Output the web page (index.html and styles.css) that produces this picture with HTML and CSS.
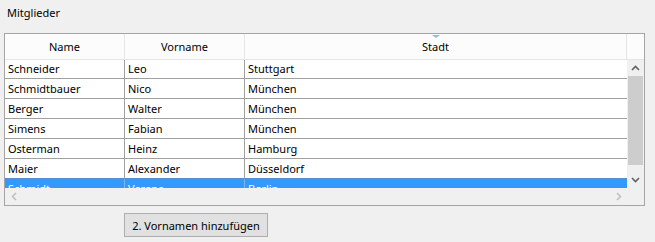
FILE: index.html
```html
<!doctype html>
<html lang="de">
<head>
    <meta charset="UTF-8">
    <title>Mitglieder</title>
    <link rel="stylesheet" href="styles.css">
</head>
<body>
    <div class="group">
        <div class="group-title">Mitglieder</div>
        <div class="grid">
            <div class="grid-header">
                <div class="head-cell">Name</div>
                <div class="head-cell">Vorname</div>
                <div class="head-cell sorted">Stadt<span class="sort-arrow"></span></div>
                <div class="head-cell filler"></div>
            </div>
            <div class="grid-body">
                <div class="row"><div class="cell">Schneider</div><div class="cell">Leo</div><div class="cell">Stuttgart</div></div>
                <div class="row"><div class="cell">Schmidtbauer</div><div class="cell">Nico</div><div class="cell">München</div></div>
                <div class="row"><div class="cell">Berger</div><div class="cell">Walter</div><div class="cell">München</div></div>
                <div class="row"><div class="cell">Simens</div><div class="cell">Fabian</div><div class="cell">München</div></div>
                <div class="row"><div class="cell">Osterman</div><div class="cell">Heinz</div><div class="cell">Hamburg</div></div>
                <div class="row"><div class="cell">Maier</div><div class="cell">Alexander</div><div class="cell">Düsseldorf</div></div>
                <div class="row selected"><div class="cell">Schmidt</div><div class="cell">Verena</div><div class="cell">Berlin</div></div>
            </div>
            <div class="vscroll">
                <div class="scroll-btn">
                    <svg width="9" height="6" viewBox="0 0 9 6"><path d="M1 5 L4.5 1.5 L8 5" fill="none" stroke="#606060" stroke-width="1.6"/></svg>
                </div>
                <div class="vtrack"><div class="vthumb"></div></div>
                <div class="scroll-btn">
                    <svg width="9" height="6" viewBox="0 0 9 6"><path d="M1 1 L4.5 4.5 L8 1" fill="none" stroke="#606060" stroke-width="1.6"/></svg>
                </div>
            </div>
            <div class="hscroll">
                <div class="scroll-btn">
                    <svg width="6" height="9" viewBox="0 0 6 9"><path d="M5 1 L1.5 4.5 L5 8" fill="none" stroke="#c0c0c0" stroke-width="1.6"/></svg>
                </div>
                <div class="scroll-btn">
                    <svg width="6" height="9" viewBox="0 0 6 9"><path d="M1 1 L4.5 4.5 L1 8" fill="none" stroke="#c0c0c0" stroke-width="1.6"/></svg>
                </div>
            </div>
            <div class="corner"></div>
        </div>
        <button class="add-btn" type="button">2. Vornamen hinzufügen</button>
    </div>
</body>
</html>
```

FILE: styles.css
```css
body {
    margin: 0;
    background: #f0f0f0;
    font-family: "Noto Sans", "Open Sans", sans-serif;
    font-size: 11px;
    color: #000;
}
.group {
    padding: 4px 0 0 4px;
}
.group-title {
    height: 29px;
    padding-left: 3px;
    line-height: 17px;
}
.grid {
    width: 639px;
    height: 171px;
    border: 1px solid #a5a5a5;
    background: #fff;
    display: grid;
    grid-template-columns: 622px 17px;
    grid-template-rows: 25px 129px 17px;
}
.grid-header {
    grid-column: 1 / 3;
    display: grid;
    grid-template-columns: 120px 120px 382px 17px;
    background: #fcfcfc;
}
.head-cell {
    position: relative;
    border-right: 1px solid #e5e5e5;
    border-bottom: 1px solid #e5e5e5;
    text-align: center;
    line-height: 25px;
}
.head-cell.filler {
    border-right: none;
}
.sort-arrow {
    position: absolute;
    top: 1px;
    left: 187px;
    width: 0;
    height: 0;
    border-left: 4px solid transparent;
    border-right: 4px solid transparent;
    border-top: 3px solid #98bad6;
}
.grid-body {
    overflow: hidden;
}
.row {
    display: grid;
    grid-template-columns: 120px 120px 382px;
    height: 20px;
    box-sizing: border-box;
    border-bottom: 1px solid #a0a0a0;
}
.cell {
    padding-left: 3px;
    line-height: 19px;
    white-space: nowrap;
    border-right: 1px solid #a0a0a0;
}
.cell:last-child {
    border-right: none;
}
.row.selected {
    background: #3399ff;
    color: #fff;
    border-top: 1px solid #5b8fc9;
    margin-top: -1px;
}
.row.selected .cell {
    border-right-color: #7fb6ee;
}
.vscroll {
    background: #f0f0f0;
    display: flex;
    flex-direction: column;
}
.scroll-btn {
    display: flex;
    align-items: center;
    justify-content: center;
    width: 17px;
    height: 17px;
    flex: none;
}
.vtrack {
    flex: 1;
    padding: 0 1px;
}
.vthumb {
    height: 89px;
    background: #cdcdcd;
}
.hscroll {
    background: #f0f0f0;
    display: flex;
    justify-content: space-between;
}
.corner {
    background: #f0f0f0;
}
.add-btn {
    display: block;
    margin: 7px 0 0 120px;
    width: 144px;
    height: 24px;
    padding: 0;
    background: #e1e1e1;
    border: 1px solid #adadad;
    border-radius: 0;
    font-family: inherit;
    font-size: 11px;
    color: #000;
}
```
